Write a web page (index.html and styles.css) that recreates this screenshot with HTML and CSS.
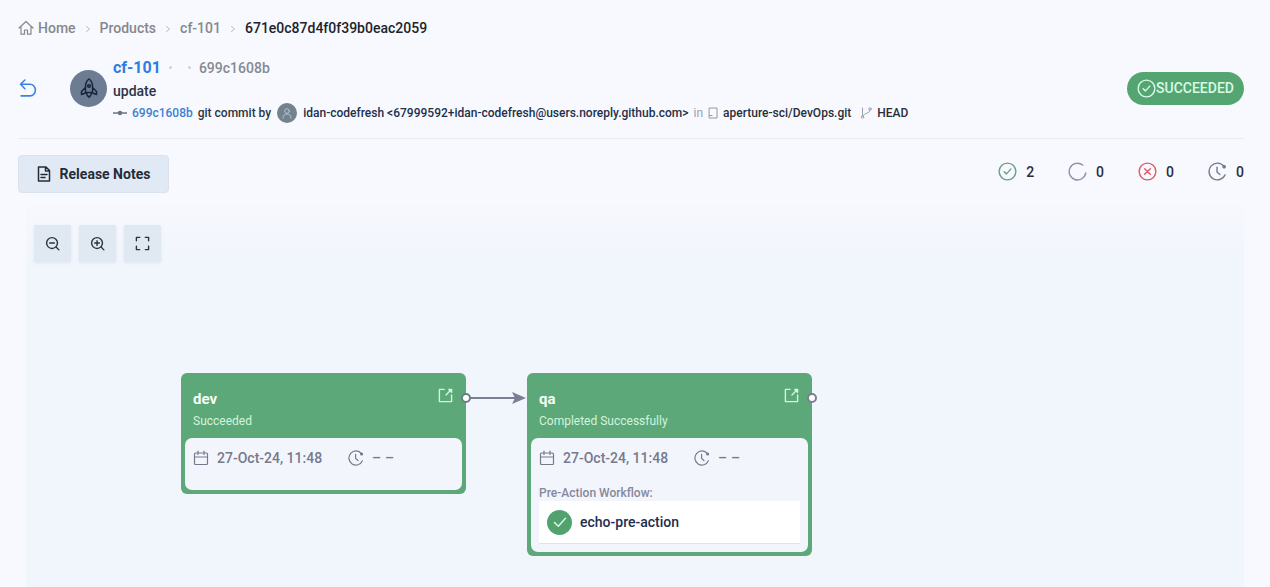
FILE: index.html
```html
<!DOCTYPE html>
<html lang="en">
<head>
<meta charset="utf-8">
<meta name="viewport" content="width=device-width, initial-scale=1">
<title>cf-101 release</title>
<link rel="stylesheet" href="styles.css">
</head>
<body>
<svg class="defs" width="0" height="0" aria-hidden="true">
  <symbol id="i-check-circle" viewBox="0 0 20 20"><circle cx="10" cy="10" r="8.8"/><path d="M6.5 10.2l2.4 2.3 4.6-5"/></symbol>
  <symbol id="i-clock" viewBox="0 0 20 20"><path d="M16.800 4.500A8.800 8.800 0 1 0 18 13.500"/><circle cx="17" cy="5" r="1.200" fill="currentColor"/><path d="M9.500 5.500V10.500l3 2.700"/></symbol>
  <symbol id="i-calendar" viewBox="0 0 16 16"><rect x="1.500" y="3" width="13" height="11.500" rx="1"/><path d="M1.500 7h13M5 1v3.500M11 1v3.500"/></symbol>
  <symbol id="i-open" viewBox="0 0 16 16"><path d="M6.500 1.500H1.500v13h13V7.500M8.500 7.500l5-5"/><path d="M11.500 1.500h3v3z" fill="currentColor"/></symbol>
  <symbol id="i-chevron" viewBox="0 0 8 8"><path d="M2.500 1.500l3 2.500-3 2.500"/></symbol>
</svg>
<main class="page">
  <nav class="crumbs" aria-label="Breadcrumb">
    <a href="#" class="home"><svg class="icon i16" viewBox="0 0 16 16"><path d="M1 8l7-6.500L15 8M3 6.800v7.400h3.500V10h3v4.200H13V6.800"/></svg>Home</a>
    <svg class="icon sep"><use href="#i-chevron"/></svg>
    <a href="#">Products</a>
    <svg class="icon sep"><use href="#i-chevron"/></svg>
    <a href="#">cf-101</a>
    <svg class="icon sep"><use href="#i-chevron"/></svg>
    <span class="current">671e0c87d4f0f39b0eac2059</span>
  </nav>

  <header class="head">
    <button class="back" aria-label="Back"><svg class="icon" viewBox="0 0 16 18"><path d="M5 1L1 5l4 4.200M1.200 5H10a5 5.500 0 0 1 0 11H1.500"/></svg></button>
    <span class="avatar"><svg class="icon" viewBox="0 0 18 20"><path d="M9 1C6.500 3 5.500 5.500 5.500 8v6.500h7V8C12.500 5.500 11.500 3 9 1zM5.500 9.500L1.500 13.500v3l4-1.500M12.500 9.500l4 4v3l-4-1.500M6.500 15c.3 2.300 1.300 3.300 2.500 4.200 1.200-.9 2.200-1.900 2.500-4.200"/><circle cx="9" cy="8" r="1.300"/></svg></span>
    <div class="info">
      <div class="title"><a href="#" class="name">cf-101</a><span class="marks"><i></i><i></i></span><span class="hash">699c1608b</span></div>
      <div class="subject">update</div>
      <div class="commit">
        <svg class="icon node" viewBox="0 0 14 8"><path d="M0 4h14"/><circle cx="7" cy="4" r="1.500" fill="currentColor"/></svg>
        <a href="#">699c1608b</a>
        <span>git commit by</span>
        <span class="user"><svg class="icon" viewBox="0 0 12 12"><circle cx="6" cy="4" r="2.300"/><path d="M2 11c0-2.600 1.500-4 4-4s4 1.400 4 4"/></svg></span>
        <span class="author">idan-codefresh &lt;67999592+idan-codefresh@users.noreply.github.com&gt;</span>
        <span class="muted">in</span>
        <svg class="icon repo" viewBox="0 0 10 12"><path d="M1.500 1h7.500v10H1.500zM1.500 8.500H4"/></svg>
        <span class="path">aperture-sci/DevOps.git</span>
        <svg class="icon branch" viewBox="0 0 12 12"><circle cx="2.500" cy="10" r="1.200"/><circle cx="10" cy="2" r="1.200"/><path d="M2.500 1v7.800M10 3.200C9.500 7 4.500 5.500 3 9"/></svg>
        <span class="path">HEAD</span>
      </div>
    </div>
    <span class="badge"><svg class="icon"><use href="#i-check-circle"/></svg>SUCCEEDED</span>
  </header>

  <section class="toolbar">
    <button class="notes"><svg class="icon" viewBox="0 0 14 16"><path d="M1.500 1h7.500l3.500 3.500V15h-11zM8.500 1v4h4M4 8.500h6M4 11.500h4"/></svg>Release Notes</button>
    <ul class="stats">
      <li class="ok"><svg class="icon"><use href="#i-check-circle"/></svg>2</li>
      <li class="run"><svg class="icon" viewBox="0 0 20 20"><path d="M15.500 3.200A8.800 8.800 0 1 0 18.700 11.500"/></svg>0</li>
      <li class="bad"><svg class="icon" viewBox="0 0 20 20"><circle cx="10" cy="10" r="8.800"/><path d="M7 7l6 6M13 7l-6 6"/></svg>0</li>
      <li class="wait"><svg class="icon"><use href="#i-clock"/></svg>0</li>
    </ul>
  </section>

  <section class="canvas">
    <div class="zoom">
      <button aria-label="Zoom out"><svg class="icon" viewBox="0 0 16 16"><circle cx="7.500" cy="7.500" r="5.800"/><path d="M5 7.500h5M11.800 11.800l3 3"/></svg></button>
      <button aria-label="Zoom in"><svg class="icon" viewBox="0 0 16 16"><circle cx="7.500" cy="7.500" r="5.800"/><path d="M5 7.500h5M7.500 5v5M11.800 11.800l3 3"/></svg></button>
      <button aria-label="Fit to screen"><svg class="icon" viewBox="0 0 16 16"><path d="M1.500 5V1.500H5M11 1.500h3.500V5M14.500 11v3.500H11M5 14.500H1.500V11"/></svg></button>
    </div>
    <article class="stage dev">
      <header><div><h2>dev</h2><p>Succeeded</p></div><a href="#" aria-label="Open dev"><svg class="icon"><use href="#i-open"/></svg></a></header>
      <div class="body">
        <div class="times"><svg class="icon cal"><use href="#i-calendar"/></svg><span class="date">27-Oct-24, 11:48</span><svg class="icon clk"><use href="#i-clock"/></svg><span class="dash"><span>–</span><span>–</span></span></div>
      </div>
    </article>
    <article class="stage qa">
      <header><div><h2>qa</h2><p>Completed Successfully</p></div><a href="#" aria-label="Open qa"><svg class="icon"><use href="#i-open"/></svg></a></header>
      <div class="body">
        <div class="times"><svg class="icon cal"><use href="#i-calendar"/></svg><span class="date">27-Oct-24, 11:48</span><svg class="icon clk"><use href="#i-clock"/></svg><span class="dash"><span>–</span><span>–</span></span></div>
        <div class="label">Pre-Action Workflow:</div>
        <div class="flow"><span class="tick"><svg class="icon" viewBox="0 0 14 14"><path d="M1.500 7.500l3.800 3.800 7.200-8"/></svg></span>echo-pre-action</div>
      </div>
    </article>
    <svg class="edges" width="360" height="16" viewBox="0 0 360 16" aria-hidden="true">
      <path d="M12 8h46" stroke="#7b7f93" stroke-width="2"/>
      <path d="M54 2l14 6-14 6 3-6z" fill="#7b7f93"/>
      <circle cx="8" cy="8" r="4" fill="#fff" stroke="#6f7b88" stroke-width="2"/>
      <circle cx="354" cy="8" r="4" fill="#fff" stroke="#7b7f93" stroke-width="2"/>
    </svg>
  </section>
</main>
</body>
</html>
```
FILE: styles.css
```css
* { box-sizing: border-box; }
body { margin: 0; background: #f7f9fe; color: #2c3548; font-family: Roboto, "Liberation Sans", sans-serif; font-size: 14px; }
a { color: inherit; text-decoration: none; }
button { border: 0; padding: 0; font: inherit; color: inherit; cursor: pointer; }
h2, p, ul { margin: 0; padding: 0; }
.defs { position: absolute; }
.icon { display: block; flex: none; fill: none; stroke: currentColor; stroke-width: 1.5; stroke-linecap: round; stroke-linejoin: round; }
.page { min-height: 100vh; display: flex; flex-direction: column; padding: 0 26px 0 18px; }

.crumbs { display: flex; align-items: center; padding-top: 18px; line-height: 20px; color: #85888f; font-weight: 500; }
.crumbs .home { display: flex; align-items: center; gap: 4px; }
.i16 { width: 16px; height: 16px; stroke-width: 1.2; }
.sep { width: 8px; height: 8px; margin: 2px 8px 0; stroke: #b5bac4; stroke-width: 1; }
.current { color: #20232b; }

.head { display: flex; align-items: center; height: 101px; border-bottom: 1px solid #e8ecf3; }
.back { width: 20px; background: none; color: #3d82e0; }
.back svg { width: 20px; height: 19px; }
.avatar { display: grid; place-items: center; flex: none; width: 37px; height: 37px; margin: 0 6px 0 32px; border-radius: 50%; background: #6c7c93; color: #17243b; }
.avatar svg { width: 18px; height: 20px; }
.info { flex: 1; min-width: 0; padding-top: 3px; }
.title { display: flex; align-items: center; line-height: 22px; }
.name { font-size: 16px; font-weight: 700; color: #2f7ce0; }
.marks { display: flex; gap: 16px; margin: 0 8px; }
.marks i { width: 3px; height: 3px; border-radius: 50%; background: #ccd1da; }
.hash { color: #858a94; font-weight: 500; }
.subject { line-height: 24px; font-weight: 500; }
.commit { display: flex; align-items: center; height: 20px; font-size: 12px; font-weight: 500; white-space: nowrap; gap: 5px; }
.commit a { color: #3c80d4; }
.node { width: 14px; height: 8px; color: #6e7482; }
.user { display: grid; place-items: center; flex: none; width: 20px; height: 20px; margin: 0 1px; border-radius: 50%; background: #73828f; color: #b6c3ce; }
.user svg { width: 12px; height: 12px; stroke-width: 1; }
.author { color: #1f304c; }
.muted { color: #9b9fa8; font-weight: 400; }
.repo { width: 10px; height: 12px; color: #9398a2; stroke-width: 1; }
.branch { width: 12px; height: 12px; margin-left: 4px; color: #9ba0aa; stroke-width: 1; }
.path { color: #292e38; }
.badge { display: flex; align-items: center; justify-content: center; flex: none; width: 117px; height: 33px; border-radius: 17px; background: #55a573; color: #d7fbe3; font-weight: 500; }
.badge svg { width: 19px; height: 19px; }

.toolbar { display: flex; align-items: center; justify-content: space-between; padding: 16px 0 12px; }
.notes { display: flex; align-items: center; justify-content: center; gap: 9px; width: 151px; height: 38px; border: 1px solid #d9e2ed; border-radius: 4px; background: #e1e9f4; color: #252c38; font-weight: 700; }
.notes svg { width: 14px; height: 16px; }
.stats { display: flex; gap: 34px; padding-bottom: 5px; list-style: none; color: #2a2d38; font-weight: 500; }
.stats li { display: flex; align-items: center; gap: 9px; }
.stats svg { width: 19px; height: 19px; }
.ok svg { color: #69a184; }
.run svg { color: #8e90ad; }
.bad svg { color: #e35c65; }
.wait svg { color: #747c8f; }

.canvas { position: relative; flex: 1; min-height: 380px; margin-left: 8px; background: linear-gradient(#f6f8fe, #f1f5fc 60px); }
.zoom { display: flex; gap: 8px; padding: 20px 8px; }
.zoom button { display: grid; place-items: center; width: 37px; height: 37px; border-radius: 2px; background: #e0e8f2; color: #2b333e; box-shadow: 0 1px 3px #dfe6f0; }
.zoom svg { width: 15px; height: 15px; }
.stage { position: absolute; top: 168px; width: 285px; padding: 0 4px 4px; border-radius: 6px; background: #5ca878; }
.dev { left: 155px; }
.qa { left: 501px; }
.stage header { display: flex; justify-content: space-between; height: 65px; padding: 15px 9px 0 8px; color: #d3f4dd; }
.stage h2 { font-size: 15px; line-height: 22px; font-weight: 700; color: #f5fff8; }
.stage p { font-size: 12px; line-height: 22px; }
.stage header svg { width: 15px; height: 15px; }
.body { min-height: 52px; padding: 8px; border-radius: 7px; background: #f3f5fd; }
.times { display: flex; align-items: center; height: 24px; color: #767a8b; font-weight: 500; }
.cal { width: 16px; height: 16px; stroke-width: 1.2; }
.clk { width: 16px; height: 16px; margin: 0 8px 0 26px; }
.date { margin-left: 8px; }
.dash { display: flex; gap: 4px; }
.label { margin-top: 15px; font-size: 12px; line-height: 16px; font-weight: 500; color: #85899a; }
.flow { display: flex; align-items: center; gap: 8px; height: 43px; padding-left: 8px; border-bottom: 1px solid #dfe2e9; background: #fff; color: #232d4d; font-weight: 500; }
.tick { display: grid; place-items: center; width: 25px; height: 25px; border-radius: 50%; background: #52a270; color: #d7f7e0; }
.tick svg { width: 14px; height: 14px; }
.edges { position: absolute; left: 432px; top: 185px; }
```
